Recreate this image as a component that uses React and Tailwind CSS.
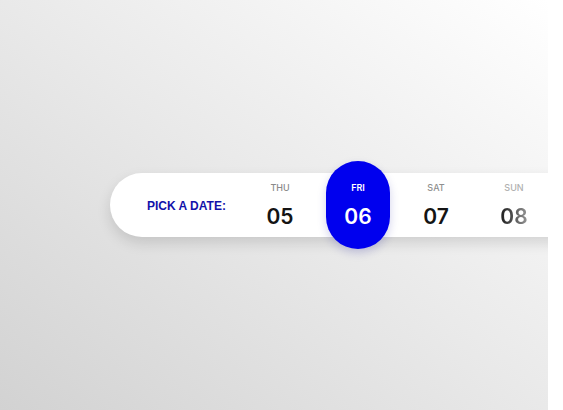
import React from "react"

const days = [
  { day: "THU", num: "05", dayColor: "text-[#8a8a8a]", numColor: "text-[#141414]" },
  { day: "FRI", num: "06", selected: true },
  { day: "SAT", num: "07", dayColor: "text-[#8f8f8f]", numColor: "text-[#141414]" },
  { day: "SUN", num: "08", dayColor: "text-[#b0b0b0]", fade: true },
]

const App = () => {
  return (
    <div className="w-[563px] h-[410px] flex bg-white overflow-hidden" style={{ fontFamily: "Inter, 'Liberation Sans', sans-serif" }}>
      {/* Canvas */}
      <div className="w-[548px] h-full shrink-0 overflow-hidden flex items-center bg-linear-to-tr from-[#d2d2d2] via-[#e9e9e9] to-white">
        {/* Date bar */}
        <div className="ml-[110px] w-[470px] h-16 shrink-0 bg-white rounded-l-full flex items-center shadow-[0_6px_14px_rgba(0,0,0,0.13)]">
          <div className="w-[131px] shrink-0 pl-[37px] pb-[3px]">
            <span
              className="text-[12px] font-bold text-[#1212aa] whitespace-nowrap"
              style={{ fontFamily: "'Liberation Sans', Arial, sans-serif" }}
            >
              PICK A DATE:
            </span>
          </div>

          {days.map((d) => (
            <div key={d.day} className="w-[78px] shrink-0 flex justify-center">
              {d.selected ? (
                <div className="w-16 h-[88px] rounded-full bg-[#0000ee] flex flex-col items-center justify-center shadow-[0_4px_10px_rgba(0,0,150,0.18)]">
                  <span className="text-[9px] leading-[12px] font-semibold text-white">{d.day}</span>
                  <span className="mt-[11px] text-[21px] leading-[24px] font-semibold text-white">{d.num}</span>
                </div>
              ) : (
                <div className="flex flex-col items-center">
                  <span className={`text-[9px] leading-[12px] font-medium ${d.dayColor}`}>{d.day}</span>
                  {d.fade ? (
                    <span className="mt-[11px] text-[21px] leading-[24px] font-semibold bg-linear-to-r from-[#1c1c1c] to-[#9a9a9a] bg-clip-text text-transparent">
                      {d.num}
                    </span>
                  ) : (
                    <span className={`mt-[11px] text-[21px] leading-[24px] font-semibold ${d.numColor}`}>{d.num}</span>
                  )}
                </div>
              )}
            </div>
          ))}
        </div>
      </div>
      {/* Right strip */}
      <div className="flex-1 bg-white" />
    </div>
  )
}

export default App
